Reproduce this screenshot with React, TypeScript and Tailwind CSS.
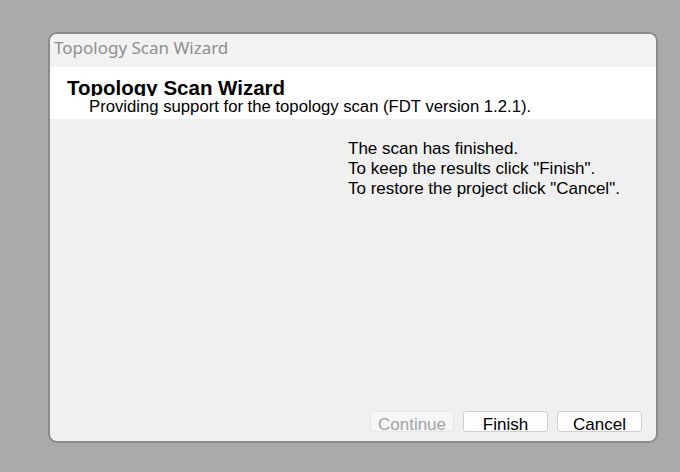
import React from 'react';

const ui = { fontFamily: '"Liberation Sans", Arial, sans-serif' };
const caption = { fontFamily: '"Noto Sans", "Open Sans", sans-serif' };

const Btn: React.FC<{ label: string; disabled?: boolean; w: string }> = ({ label, disabled, w }) => (
  <div
    className={`${w} h-[21px] rounded-[3px] border overflow-hidden flex justify-center text-[17px] leading-[17px] pt-[4px] ${
      disabled ? 'bg-[#f6f6f6] border-[#e6e6e6] text-[#a3a3a3]' : 'bg-[#fdfdfd] border-[#cfcfcf] text-black'
    }`}
  >
    {label}
  </div>
);

const App: React.FC = () => {
  return (
    <div className="w-[680px] h-[472px] bg-[#aaaaaa] pt-[32px] pl-[48px] overflow-hidden" style={ui}>
      <div className="w-[610px] h-[411px] border-2 border-[#8b8b8b] rounded-[9px] bg-[#f0f0f0] overflow-hidden flex flex-col">
        {/* Title bar */}
        <div className="h-[33px] bg-[#f2f2f2] pl-[4px] pt-[3px] text-[17px] leading-[22px] text-[#8f8f8f]" style={caption}>
          Topology Scan Wizard
        </div>

        {/* Header */}
        <div className="h-[52px] bg-white">
          <div className="h-[29px] overflow-hidden pl-[17px] pt-[10px] text-[20.5px] leading-[22px] font-bold text-black">
            Topology Scan Wizard
          </div>
          <div className="pl-[39px] pt-[2px] text-[16.7px] leading-[18px] text-black">
            Providing support for the topology scan (FDT version 1.2.1).
          </div>
        </div>

        {/* Body */}
        <div className="flex-1 flex flex-col">
          <div className="pl-[298px] pt-[20px] text-[17px] leading-[20px] text-black">
            <div>The scan has finished.</div>
            <div>To keep the results click "Finish".</div>
            <div>To restore the project click "Cancel".</div>
          </div>
          <div className="mt-auto flex justify-end gap-[9px] pr-[14px] pb-[9px]">
            <Btn label="Continue" disabled w="w-[84px]" />
            <Btn label="Finish" w="w-[85px]" />
            <Btn label="Cancel" w="w-[85px]" />
          </div>
        </div>
      </div>
    </div>
  );
};

export default App;
